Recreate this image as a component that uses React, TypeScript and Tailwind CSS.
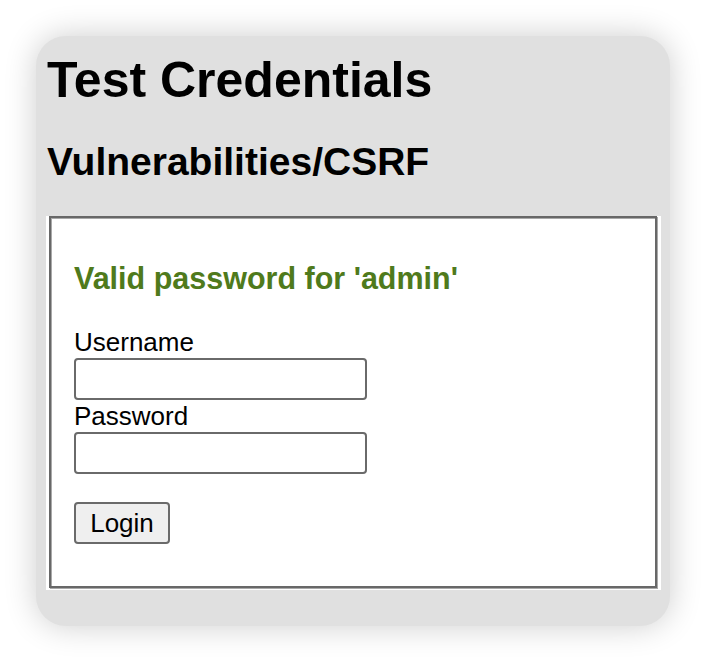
import React from 'react';

const App: React.FC = () => {
    return (
        <div className="h-[662px] w-[706px] bg-white pl-[36px] pt-[36px] font-['Liberation_Sans',Arial,sans-serif] text-black">
            <div className="h-[590px] w-[634px] rounded-[30px] bg-[#e0e0e0] pt-[15px] shadow-[0_0_32px_rgba(0,0,0,0.2)]">
                <h1 className="pl-[11px] text-[50px] font-bold leading-[58px]">Test Credentials</h1>
                <h2 className="mt-[31px] pl-[11px] text-[39px] font-bold leading-[44px]">Vulnerabilities/CSRF</h2>

                <div className="ml-[10px] mt-[32px] h-[374px] w-[615px] bg-white pb-[2px] pl-[3px] pr-[4px]">
                    <div className="h-full border-2 border-[#686868] pl-[23px] pt-[43px] shadow-[1px_1px_0_#a9a9a9,inset_1px_1px_0_#a9a9a9]">
                        <h3 className="text-[30.5px] font-bold leading-[35px] text-[#4f7a1c]">Valid password for 'admin'</h3>

                        <form className="mt-[31px] flex flex-col items-start text-[26px]" onSubmit={(e) => e.preventDefault()}>
                            <label className="leading-[30px]">Username</label>
                            <input
                                type="text"
                                className="mt-px h-[42px] w-[293px] rounded-[4px] border-2 border-[#6a6a6a] bg-white px-2 outline-none"
                            />
                            <label className="mt-px leading-[30px]">Password</label>
                            <input
                                type="password"
                                className="mt-px h-[42px] w-[293px] rounded-[4px] border-2 border-[#6a6a6a] bg-white px-2 outline-none"
                            />
                            <button
                                type="submit"
                                className="mt-[28px] h-[42px] w-[96px] rounded-[4px] border-2 border-[#6a6a6a] bg-[#efefef] leading-none"
                            >
                                Login
                            </button>
                        </form>
                    </div>
                </div>
            </div>
        </div>
    );
};

export default App;
